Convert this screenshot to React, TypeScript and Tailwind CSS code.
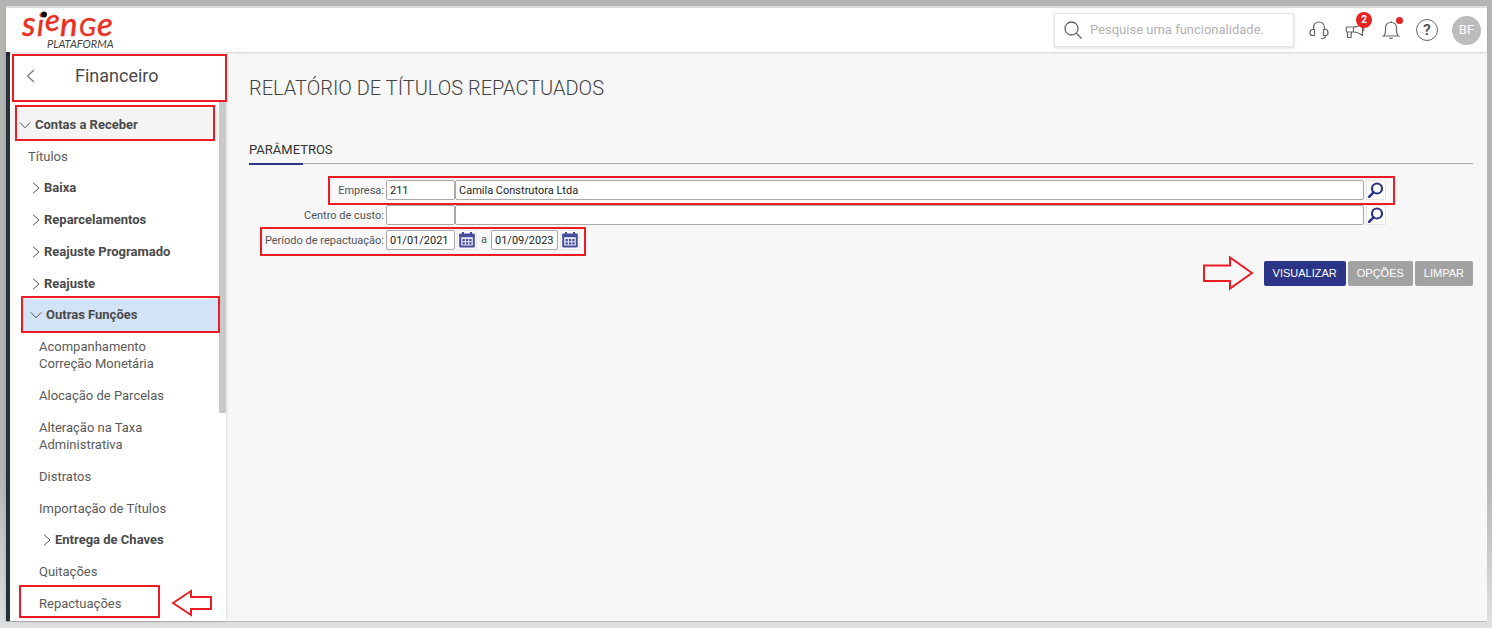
import { useState } from 'react';
import type { ReactNode } from 'react';

// Red rectangle drawn over the parts the guide points at
function Highlight({ className }: { className: string }) {
  return <span aria-hidden="true" className={`absolute z-10 border-2 border-[#ec1c24] pointer-events-none ${className}`} />;
}

function Chevron({ open }: { open?: boolean }) {
  return open ? (
    <svg className="w-3 h-3 shrink-0" viewBox="0 0 12 12" fill="none" stroke="#555">
      <path d="M0.8 3.4 L6 8.8 L11.2 3.4" />
    </svg>
  ) : (
    <svg className="w-2 h-3 shrink-0" viewBox="0 0 8 12" fill="none" stroke="#555">
      <path d="M1 0.8 L7 6 L1 11.2" />
    </svg>
  );
}

function Group({ label, open, className = '' }: { label: string; open?: boolean; className?: string }) {
  return (
    <button aria-expanded={!!open} className={`flex items-center gap-1 w-full h-8 font-bold text-[#4a4a4a] ${className}`}>
      <Chevron open={open} />
      {label}
    </button>
  );
}

function Item({ children, className = 'pl-[29px]' }: { children: ReactNode; className?: string }) {
  return (
    <a href="#" className={`block pt-[7px] pb-2 pr-4 leading-[17px] ${className}`}>
      {children}
    </a>
  );
}

function Logo() {
  return (
    <a href="#" aria-label="Sienge Plataforma" className="ml-4 block">
      <svg width="94" height="42" viewBox="0 0 94 42" className="overflow-visible">
        <g fill="#e8321f" stroke="#e8321f" strokeWidth="0.3" fontFamily="Lato, sans-serif" fontStyle="italic" fontWeight="500">
          <text x="0" y="27" fontSize="34">s</text>
          <text x="15" y="27" fontSize="30">i</text>
          <text x="23" y="22" fontSize="31">e</text>
          <text x="38" y="27" fontSize="33">n</text>
          <text x="57" y="27" fontSize="25">G</text>
          <text x="75" y="27" fontSize="33">e</text>
        </g>
        <circle cx="22" cy="5.500" r="3" fill="#111" />
        <text x="25" y="39" fontSize="11" fontStyle="italic" fontFamily="Lato, sans-serif" fill="#444">PLATAFORMA</text>
      </svg>
    </a>
  );
}

function Lens() {
  return (
    <svg width="18" height="18" viewBox="0 0 18 18" fill="none" stroke="#2b3487">
      <circle cx="10" cy="7.500" r="5" strokeWidth="2.200" />
      <path d="M6.500 11.300 L2.100 15.800" strokeWidth="2.600" strokeLinecap="round" />
    </svg>
  );
}

function CalendarIcon() {
  return (
    <svg width="18" height="18" viewBox="0 0 18 18">
      <path d="M2.200 3.500h13.600v12H2.200z" fill="#eceaf4" stroke="#454d9d" strokeWidth="2" strokeLinejoin="round" />
      <path d="M1.500 3h15v3.200h-15z" fill="#454d9d" />
      <path d="M5 1v3M13 1v3" stroke="#454d9d" strokeWidth="2" />
      <path d="M4.500 8h2.300v2.300H4.500zM7.900 8h2.300v2.300H7.900zM11.300 8h2.300v2.300h-2.300zM4.500 11.300h2.300v2.300H4.500zM7.900 11.300h2.300v2.300H7.900zM11.300 11.300h2.300v2.300h-2.300z" fill="#454d9d" />
    </svg>
  );
}

function IconButton({ label, children }: { label: string; children: ReactNode }) {
  return (
    <button type="button" aria-label={label} className="flex items-center justify-center w-5 h-5 shrink-0 bg-white border border-[#e6e6e6]">
      {children}
    </button>
  );
}

function Arrow({ left }: { left?: boolean }) {
  return left ? (
    <svg width="42" height="28" viewBox="0 0 42 28" fill="#fff" stroke="#ec1c24" strokeWidth="2">
      <path d="M2 14 L20 2 V8 H40 V20 H20 V26 Z" />
    </svg>
  ) : (
    <svg width="52" height="36" viewBox="0 0 52 36" fill="none" stroke="#ec1c24" strokeWidth="2">
      <path d="M50 18 L28 2.500 V10.500 H2 V26 H28 V33.500 Z" />
    </svg>
  );
}

const inputClass = 'h-5 min-w-0 px-[3px] bg-white border border-[#a9a9a9] rounded-xs text-[#222] outline-none';
const labelClass = 'w-[135px] pt-[2px] shrink-0 text-right text-[#555]';

function LookupRow({ label, id, code, name, children }: { label: string; id: string; code: string; name: string; children?: ReactNode }) {
  const [codeValue, setCodeValue] = useState(code);
  const [nameValue, setNameValue] = useState(name);

  return (
    <div className="relative flex items-center pr-[87px]">
      <label htmlFor={id} className={labelClass}>{label}</label>
      <input id={id} value={codeValue} onChange={(e) => setCodeValue(e.target.value)} className={`ml-[2px] w-[69px] ${inputClass}`} />
      <input aria-label={`${label} nome`} value={nameValue} onChange={(e) => setNameValue(e.target.value)} className={`flex-1 mr-[2px] ${inputClass}`} />
      <IconButton label="Pesquisar"><Lens /></IconButton>
      {children}
    </div>
  );
}

function Header() {
  return (
    <header className="relative z-20 flex items-center h-[46px] bg-white border-t-2 border-[#dcdddd] shadow-[0_1px_2px_rgba(0,0,0,0.15)]">
      <Logo />
      <div className="ml-auto flex items-center w-60 h-[34px] px-[9px] gap-2 bg-white border border-[#e3e3e3] shadow-[0_1px_3px_rgba(0,0,0,0.15)]">
        <svg width="18" height="18" viewBox="0 0 18 18" fill="none" stroke="#666" strokeWidth="1.300" className="shrink-0">
          <circle cx="7.500" cy="7.500" r="6.500" />
          <path d="M12.300 12.300 L17.500 17.500" />
        </svg>
        <input aria-label="Pesquisar" placeholder="Pesquise uma funcionalidade." className="flex-1 min-w-0 text-[13px] outline-none placeholder:text-[#b3b3b3]" />
      </div>
      <div className="flex items-center pl-[15px] pr-[6px]">
        <button aria-label="Suporte">
          <svg width="20" height="20" viewBox="0 0 20 20" fill="none" stroke="#666" strokeWidth="1.200">
            <path d="M4.500 10 V8.500 C4.500 4.200 6.800 2 10 2 S15.500 4.200 15.500 8.500 V10" />
            <path d="M5.500 9.500 V15.500 H3 C1.500 15.500 1 14.800 1 12.800 S1.800 9.500 3.500 9.500 Z" />
            <path d="M14.500 9.500 V15.500 H17 C18.500 15.500 19 14.800 19 12.800 S18.200 9.500 16.500 9.500 Z" />
            <path d="M16.500 15.500 C16.500 17.800 15 18.700 12 18.700" />
          </svg>
        </button>
        <button aria-label="Novidades" className="relative ml-4">
          <svg width="21" height="20" viewBox="0 0 21 20" fill="none" stroke="#666" strokeWidth="1.200" strokeLinejoin="round">
            <path d="M2 7 H8.500 C12 7 15 5.500 17.500 3.500 V15.500 C15 13.500 12 12 8.500 12 H2 C0.700 11 0.700 8 2 7 Z" />
            <path d="M8.500 7 V12 M2.500 12 V17.500 H6 L6.500 12 M17.500 8 C19.500 8 19.500 11 17.500 11" />
          </svg>
          <span className="absolute -top-[8px] left-[11px] w-4 h-4 rounded-full bg-[#e52421] text-white text-[10px] leading-4 font-bold">2</span>
        </button>
        <button aria-label="Notificações" className="relative ml-4">
          <svg width="18" height="20" viewBox="0 0 18 20" fill="none" stroke="#666" strokeWidth="1.200">
            <path d="M1.500 16 C3 15 3.500 13.500 3.500 10 V8 C3.500 4.500 5.500 2.500 9 2.500 S14.500 4.500 14.500 8 V10 C14.500 13.500 15 15 16.500 16 Z" />
            <path d="M9 2.500 V1 M7.300 18.300 H10.700" />
          </svg>
          <span className="absolute -top-[3px] left-[14px] w-[7px] h-[7px] rounded-full bg-[#e52421]" />
        </button>
        <button aria-label="Ajuda" className="ml-4 w-[22px] h-[22px] rounded-full border border-[#666] text-[#555] text-[15px] leading-5 font-bold">?</button>
        <button aria-label="Perfil" className="ml-[14px] w-[29px] h-[29px] rounded-full bg-[#bcbcbc] text-white text-[13px]">BF</button>
      </div>
    </header>
  );
}

function Sidebar() {
  return (
    <aside className="flex flex-col w-[220px] shrink-0 bg-white border-l-4 border-[#263038] text-[13px] text-[#5a5a5a] shadow-[0_0_3px_rgba(0,0,0,0.2)]">
      <div className="relative flex items-center h-[50px] pl-4 pb-[3px]">
        <Highlight className="top-[2px] bottom-0 left-[2px] -right-px" />
        <button aria-label="Voltar">
          <svg width="9" height="14" viewBox="0 0 9 14" fill="none" stroke="#777" strokeWidth="1.200">
            <path d="M8 1 L1.500 7 L8 13" />
          </svg>
        </button>
        <h2 className="ml-10 text-[18px] text-[#4a4a4a]">Financeiro</h2>
      </div>
      <div className="flex">
        <nav className="flex-1 min-w-0 pt-[7px]">
          <div className="relative bg-[#f4f4f4]">
            <Highlight className="-top-1 bottom-0 left-[5px] right-1" />
            <Group label="Contas a Receber" open className="pl-[9px]" />
          </div>
          <Item className="pl-[18px]">Títulos</Item>
          <div className="-mt-px">
            <Group label="Baixa" className="pl-[22px]" />
            <Group label="Reparcelamentos" className="pl-[22px]" />
            <Group label="Reajuste Programado" className="pl-[22px]" />
            <Group label="Reajuste" className="pl-[22px]" />
          </div>
          <div className="relative -mt-px ml-3 bg-[#d2e2f7]">
            <Highlight className="-top-[3px] -bottom-[2px] -left-px -right-px" />
            <Group label="Outras Funções" open className="pl-2" />
          </div>
          <Item>Acompanhamento<br />Correção Monetária</Item>
          <Item>Alocação de Parcelas</Item>
          <Item>Alteração na Taxa<br />Administrativa</Item>
          <Item>Distratos</Item>
          <Item>Importação de Títulos</Item>
          <Group label="Entrega de Chaves" className="-mt-px pl-[33px]" />
          <Item>Quitações</Item>
          <div className="relative">
            <Highlight className="-top-[3px] bottom-[2px] left-[9px] right-[59px]" />
            <Item>Repactuações</Item>
            <div className="absolute top-px right-[6px]"><Arrow left /></div>
          </div>
        </nav>
        <div className="w-[7px] h-[311px] bg-[#c9c9c9]" />
      </div>
    </aside>
  );
}

export default function App() {
  const [start, setStart] = useState('01/01/2021');
  const [end, setEnd] = useState('01/09/2023');

  return (
    <div className="flex flex-col min-h-screen pt-[6px] pl-[6px] pr-[5px] pb-[6px] bg-linear-to-b from-[#b3b5b3] from-75% to-[#dfe0df] font-[Roboto,sans-serif]">
      <Header />
      <div className="flex flex-1 bg-[#f7f7f7] border-b border-[#b8b8b8]">
        <Sidebar />
        <main className="flex-1 min-w-0 pt-5 pl-[23px] pr-[14px] text-[11px]">
          <h1 className="mt-1 text-[20px] leading-6 font-light text-[#444]">RELATÓRIO DE TÍTULOS REPACTUADOS</h1>

          <section className="mt-10">
            <h2 className="relative h-6 border-b border-[#a9a9a9] text-[13px] leading-5 text-[#333]">
              PARÂMETROS
              <span className="absolute left-0 -bottom-[2px] w-[54px] h-[2px] bg-[#2b3487]" />
            </h2>

            <form className="mt-4 flex flex-col gap-[5px]" onSubmit={(e) => e.preventDefault()}>
              <LookupRow label="Empresa:" id="empresa" code="211" name="Camila Construtora Ltda">
                <Highlight className="-top-1 -bottom-[5px] left-[79px] right-[78px]" />
              </LookupRow>
              <LookupRow label="Centro de custo:" id="centro" code="" name="" />
              <div className="relative flex items-center self-start">
                <Highlight className="-top-[3px] -bottom-[6px] left-[11px] -right-[6px]" />
                <label htmlFor="inicio" className={labelClass}>Período de repactuação:</label>
                <input id="inicio" value={start} onChange={(e) => setStart(e.target.value)} className={`ml-[2px] mr-[2px] w-[69px] ${inputClass}`} />
                <IconButton label="Data inicial"><CalendarIcon /></IconButton>
                <label htmlFor="fim" className="px-1 text-[#555]">a</label>
                <input id="fim" value={end} onChange={(e) => setEnd(e.target.value)} className={`mr-[2px] w-[67px] ${inputClass}`} />
                <IconButton label="Data final"><CalendarIcon /></IconButton>
              </div>

              <div className="flex items-center justify-end gap-[2px] font-['Liberation_Sans',sans-serif] text-white">
                <div className="mr-2"><Arrow /></div>
                <button className="h-[25px] px-[9px] rounded-xs bg-[#2b3487]">VISUALIZAR</button>
                <button type="button" className="h-[25px] px-[9px] rounded-xs bg-[#a2a2a2]">OPÇÕES</button>
                <button type="button" className="h-[25px] px-[9px] rounded-xs bg-[#a2a2a2]">LIMPAR</button>
              </div>
            </form>
          </section>
        </main>
      </div>
    </div>
  );
}
